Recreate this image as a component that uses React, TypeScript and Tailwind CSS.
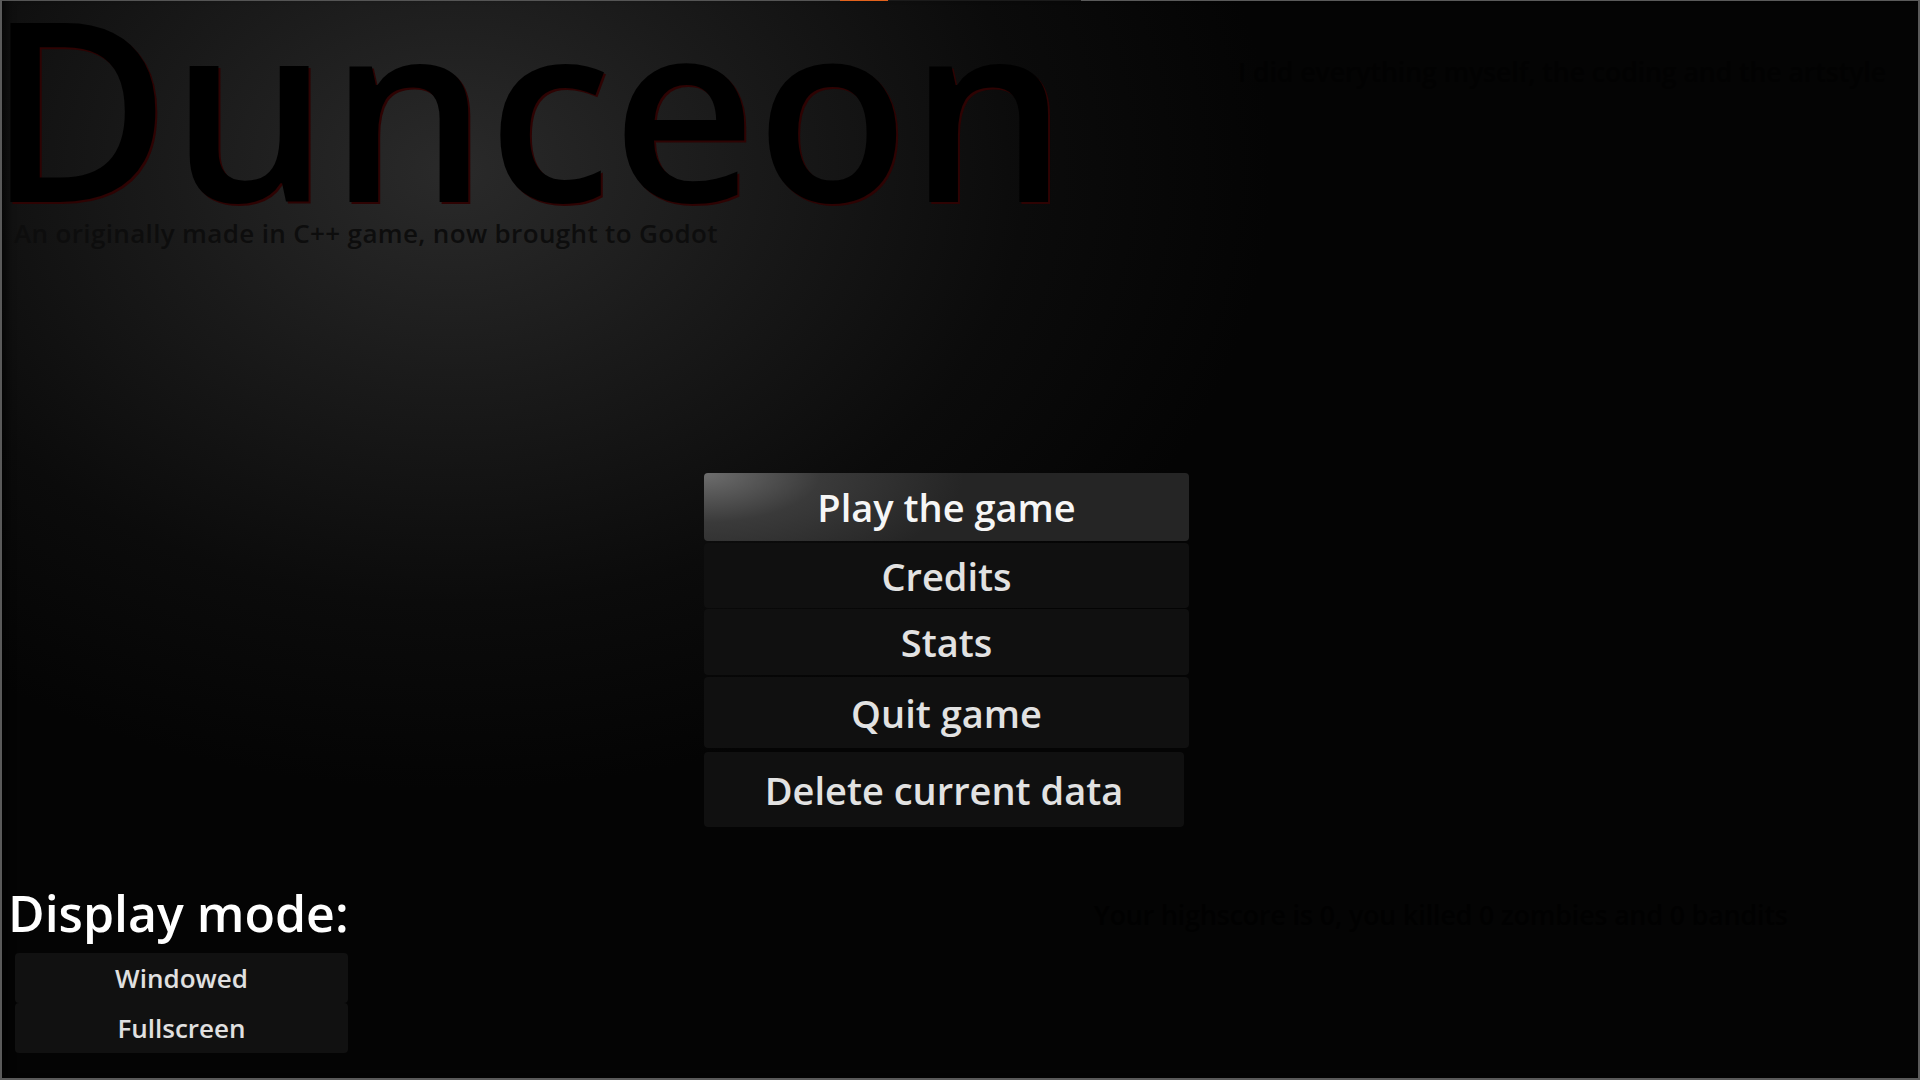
const menuItems = [
  { label: 'Play the game', h: 'h-[68px]', mt: 'mt-0', w: 'w-[485px]', active: true },
  { label: 'Credits', h: 'h-[65px]', mt: 'mt-[2px]', w: 'w-[485px]', active: false },
  { label: 'Stats', h: 'h-[66px]', mt: 'mt-[1px]', w: 'w-[485px]', active: false },
  { label: 'Quit game', h: 'h-[71px]', mt: 'mt-[2px]', w: 'w-[485px]', active: false },
  { label: 'Delete current data', h: 'h-[75px]', mt: 'mt-[4px]', w: 'w-[480px]', active: false },
];

function MenuButton({ label, h, mt, w, active }: (typeof menuItems)[number]) {
  return (
    <button
      className={`${h} ${mt} ${w} flex items-center justify-center rounded-[4px] text-[38px] leading-none font-semibold ${
        active
          ? 'bg-[radial-gradient(ellipse_260px_110px_at_0%_0%,#6e6e6e_0%,#3a3a3a_45%,#252525_100%)] text-[#f6f6f6]'
          : 'bg-[#101010] text-[#e2e2e2]'
      }`}
    >
      {label}
    </button>
  );
}

function DisplayButton({ label }: { label: string }) {
  return (
    <button className="h-[50px] w-[333px] flex items-center justify-center rounded-[4px] bg-[#111111] text-[26px] leading-none font-semibold text-[#e0e0e0]">
      {label}
    </button>
  );
}

export default function App() {
  return (
    <div className="w-[1920px] h-[1080px] overflow-hidden flex flex-col border-x-2 border-b-2 border-[#5a5a5a] bg-[#040404] bg-[radial-gradient(ellipse_820px_620px_at_450px_170px,#2a2a2a_0%,#1a1a1a_35%,#0b0b0b_70%,#040404_100%)] shadow-[inset_10px_0_10px_-6px_rgba(0,0,0,0.7)] font-['Open_Sans',sans-serif]">
      {/* window top edge */}
      <div className="flex h-px shrink-0">
        <div className="w-[838px] bg-[#555555]" />
        <div className="w-[48px] bg-[#e2621c]" />
        <div className="w-[193px] bg-[#1b1b1b]" />
        <div className="flex-1 bg-[#5a5a5a]" />
      </div>

      {/* header */}
      <div className="flex justify-between items-start h-[249px] shrink-0">
        <div className="flex flex-col">
          <h1 className="mt-[4px] -ml-[15px] text-[250px] leading-[200px] font-semibold whitespace-nowrap text-black [text-shadow:2px_2px_0_#2e0303]">
            Dunceon
          </h1>
          <p className="mt-[12px] ml-[12px] text-[26px] leading-[32px] tracking-[0.35px] font-semibold whitespace-nowrap text-[#0d0d0d]">
            An originally made in C++ game, now brought to Godot
          </p>
        </div>
        <p className="mt-[53px] mr-[32px] text-[26.5px] leading-[36px] font-semibold whitespace-nowrap text-[#020202]">
          I did everything myself, the coding and the artstyle
        </p>
      </div>

      {/* main menu */}
      <div className="mt-[223px] ml-[702px] flex flex-col">
        {menuItems.map((item) => (
          <MenuButton key={item.label} {...item} />
        ))}
      </div>

      {/* bottom */}
      <div className="mt-[55px] flex items-start">
        <div className="w-[348px] shrink-0 flex flex-col">
          <h2 className="mt-[1px] ml-[6px] text-[50px] leading-[60px] font-semibold whitespace-nowrap text-white">
            Display mode:
          </h2>
          <div className="mt-[10px] ml-[13px] flex flex-col">
            <DisplayButton label="Windowed" />
            <DisplayButton label="Fullscreen" />
          </div>
        </div>
        <p className="mt-[15px] ml-[744px] text-[26.5px] leading-[36px] font-semibold whitespace-nowrap text-[#010101]">
          Your highscore is 0, you killed 0 zombies and 0 bandits
        </p>
      </div>
    </div>
  );
}
